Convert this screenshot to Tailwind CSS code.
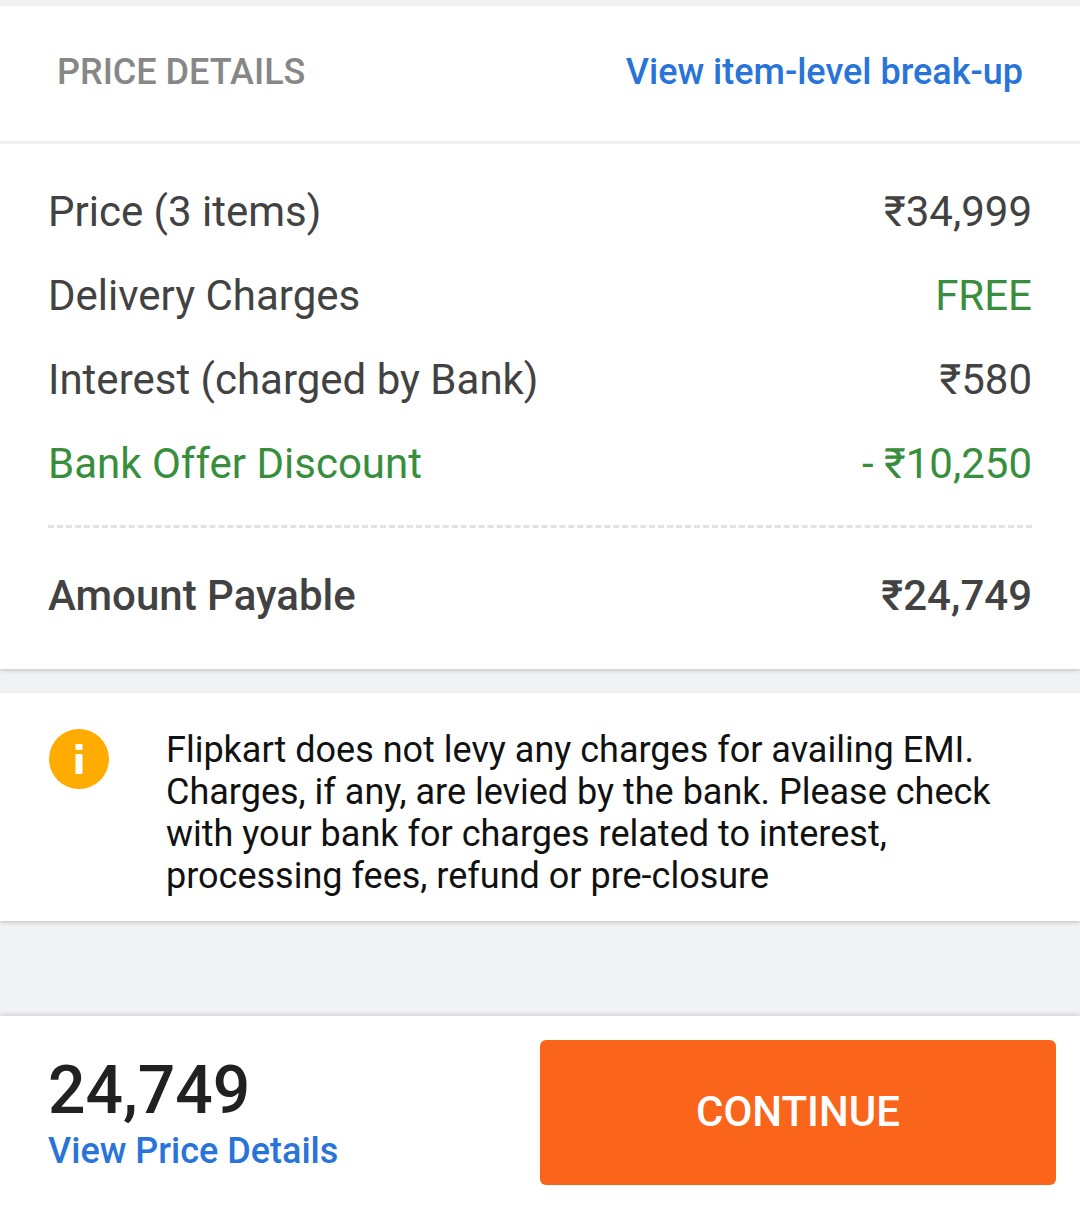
<!DOCTYPE html>
<html lang="en">

<head>
  <meta charset="UTF-8">
  <meta name="viewport" content="width=device-width, initial-scale=1.0">
  <title>Price Details</title>
  <script src="https://cdn.jsdelivr.net/npm/@tailwindcss/browser@4"></script>
</head>

<body class="bg-[#f1f2f4] font-['Roboto',sans-serif] h-[1207px] overflow-hidden flex flex-col">
  <div class="h-[6px]"></div>

  <!-- Price details -->
  <section class="bg-white shadow-[0_2px_4px_rgba(0,0,0,0.16)]">
    <div class="h-[131px] pb-[4px] flex items-center justify-between px-[57px] border-b-[3px] border-[#f0f0f0] box-content">
      <span class="text-[36px] font-medium text-[#878787]">PRICE DETAILS</span>
      <a class="text-[36px] font-medium text-[#2874d8]">View item-level break-up</a>
    </div>
    <div class="px-[48px] pt-[25px] pb-[32px] text-[42px] text-[#424242]">
      <div class="h-[84px] flex items-center justify-between"><span>Price (3 items)</span><span>₹34,999</span></div>
      <div class="h-[84px] flex items-center justify-between"><span>Delivery Charges</span><span class="text-[#388e3c]">FREE</span></div>
      <div class="h-[84px] flex items-center justify-between"><span>Interest (charged by Bank)</span><span>₹580</span></div>
      <div class="h-[84px] flex items-center justify-between text-[#388e3c]"><span>Bank Offer Discount</span><span>- ₹10,250</span></div>
      <div class="mt-[20px] border-t-[3px] border-dashed border-[#e2e2e2]"></div>
      <div class="mt-[25px] h-[84px] flex items-center justify-between font-medium"><span>Amount Payable</span><span>₹24,749</span></div>
    </div>
  </section>

  <!-- EMI notice -->
  <section class="mt-[24px] bg-white shadow-[0_2px_4px_rgba(0,0,0,0.16)] h-[228px] flex pl-[49px] pt-[36px]">
    <svg class="w-[60px] h-[60px] shrink-0" viewBox="0 0 60 60">
      <circle cx="30" cy="30" r="30" fill="#ffab00" />
      <rect x="26.5" y="15" width="7" height="6" fill="#fff" />
      <rect x="26.5" y="25" width="7" height="20" fill="#fff" />
    </svg>
    <p class="ml-[57px] w-[860px] text-[36px] leading-[42px] text-[#111]">Flipkart does not levy any charges for availing EMI.<br>Charges, if any, are levied by the bank. Please check<br>with your bank for charges related to interest,<br>processing fees, refund or pre-closure</p>
  </section>

  <div class="h-[95px]"></div>

  <!-- Footer -->
  <footer class="flex-1 bg-white shadow-[0_-2px_4px_rgba(0,0,0,0.12)] flex justify-between pl-[48px] pr-[24px] pt-[24px]">
    <div class="pt-[15px]">
      <div class="text-[66px] leading-[72px] font-medium text-[#212121]">24,749</div>
      <a class="block mt-[3px] text-[36px] leading-[42px] font-medium text-[#2874d8]">View Price Details</a>
    </div>
    <button class="w-[516px] h-[145px] pb-[2px] rounded-[6px] bg-[#fb641b] text-white text-[42px] font-medium">CONTINUE</button>
  </footer>
</body>

</html>
